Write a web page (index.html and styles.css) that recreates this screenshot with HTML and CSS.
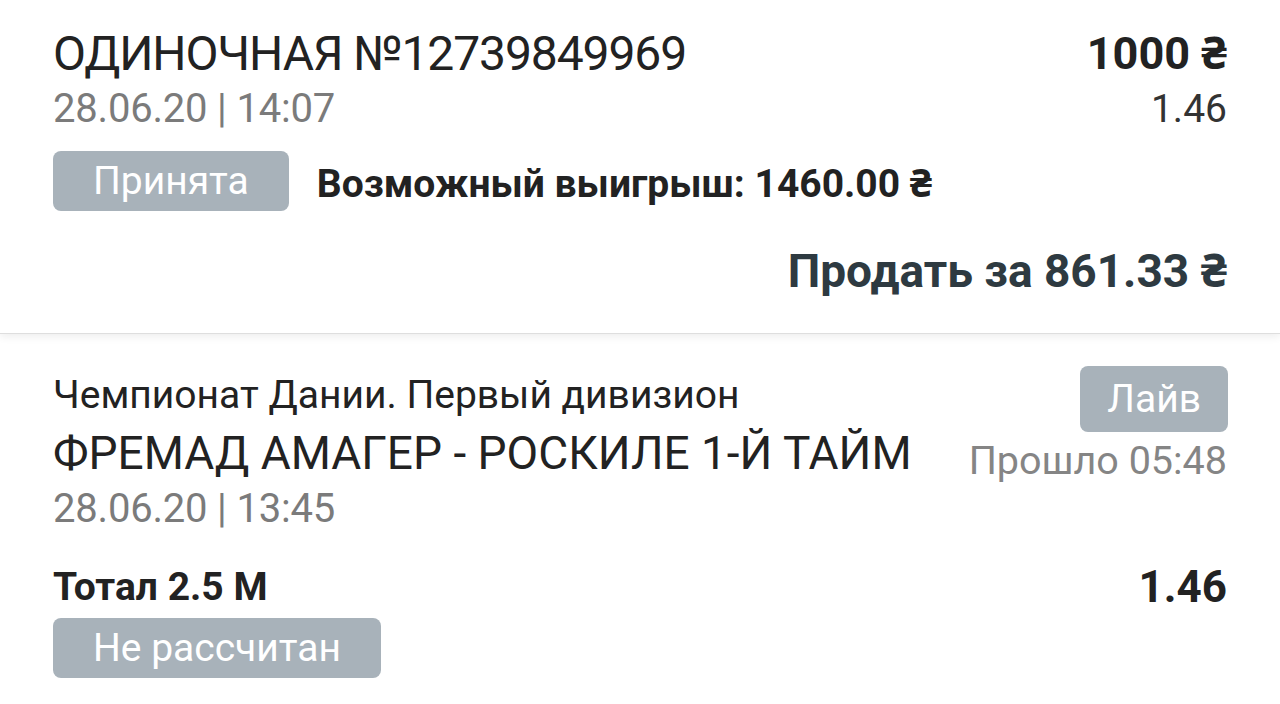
FILE: index.html
```html
<!DOCTYPE html>
<html lang="ru">
  <head>
    <meta charset="UTF-8" />
    <meta name="viewport" content="width=device-width, initial-scale=1.0" />
    <title>Ставка</title>
    <link rel="stylesheet" href="styles.css">
  </head>
  <body>
    <div class="bet-card">
      <div class="bet-summary">
        <div class="row">
          <span class="bet-title">ОДИНОЧНАЯ №12739849969</span>
          <span class="bet-amount">1000 ₴</span>
        </div>
        <div class="row">
          <span class="bet-date">28.06.20 | 14:07</span>
          <span class="bet-coef">1.46</span>
        </div>
        <div class="status-row">
          <span class="badge">Принята</span>
          <span class="possible-win">Возможный выигрыш: 1460.00 ₴</span>
        </div>
        <div class="sell-row">
          <span class="sell-text">Продать за 861.33 ₴</span>
        </div>
      </div>

      <div class="event">
        <div class="event-head">
          <div class="event-info">
            <div class="league">Чемпионат Дании. Первый дивизион</div>
            <div class="match">ФРЕМАД АМАГЕР - РОСКИЛЕ 1-Й ТАЙМ</div>
            <div class="event-date">28.06.20 | 13:45</div>
          </div>
          <div class="event-live">
            <span class="badge badge-live">Лайв</span>
            <span class="elapsed">Прошло 05:48</span>
          </div>
        </div>
        <div class="row outcome-row">
          <span class="outcome">Тотал 2.5 М</span>
          <span class="outcome-coef">1.46</span>
        </div>
        <div class="outcome-status">
          <span class="badge">Не рассчитан</span>
        </div>
      </div>
    </div>
  </body>
</html>
```

FILE: styles.css
```css
body {
  margin: 0;
  background: #fff;
  font-family: Roboto, "Noto Sans", sans-serif;
  color: #222;
}

.bet-card {
  width: 1280px;
}

.bet-summary {
  padding: 27px 53px 34px;
  border-bottom: 1px solid #dedede;
  box-shadow: 0 3px 8px rgba(0, 0, 0, 0.07);
}

.row {
  display: flex;
  justify-content: space-between;
  align-items: center;
}

.bet-title {
  font-size: 48px;
  line-height: 54px;
  letter-spacing: -1.1px;
  color: #222;
}
.bet-amount {
  font-size: 45px;
  line-height: 54px;
  font-weight: 700;
  color: #222;
}

.bet-date {
  font-size: 40px;
  line-height: 56px;
  letter-spacing: -0.2px;
  color: #7b7b7b;
}
.bet-coef {
  font-size: 39px;
  line-height: 56px;
  color: #333;
}

.status-row {
  display: flex;
  align-items: center;
  margin-top: 14px;
}

.badge {
  display: inline-block;
  height: 60px;
  line-height: 60px;
  padding: 0 40px;
  border-radius: 8px;
  background: #a8b2ba;
  color: #fff;
  font-size: 39px;
}

.possible-win {
  margin-left: 28px;
  font-size: 39px;
  font-weight: 700;
  color: #222;
}

.sell-row {
  display: flex;
  justify-content: flex-end;
  margin-top: 32px;
}
.sell-text {
  font-size: 46px;
  line-height: 56px;
  font-weight: 700;
  color: #2e3a41;
}

.event {
  padding: 37px 53px 0;
}

.event-head {
  display: flex;
  justify-content: space-between;
}

.league {
  font-size: 39px;
  line-height: 48px;
  color: #222;
}
.match {
  margin-top: 5px;
  font-size: 46px;
  line-height: 58px;
  color: #222;
}
.event-date {
  font-size: 40px;
  line-height: 54px;
  letter-spacing: -0.2px;
  color: #7b7b7b;
}

.event-live {
  display: flex;
  flex-direction: column;
  align-items: flex-end;
}
.badge-live {
  margin-top: -5px;
  margin-right: -1px;
  height: 66px;
  line-height: 66px;
  padding: 0 27px;
}
.elapsed {
  margin-top: 4px;
  font-size: 39.5px;
  line-height: 50px;
  color: #858585;
}

.outcome-row {
  margin-top: 26px;
}
.outcome {
  font-size: 39px;
  line-height: 50px;
  font-weight: 700;
  color: #222;
}
.outcome-coef {
  font-size: 44px;
  line-height: 50px;
  font-weight: 700;
  color: #222;
}

.outcome-status {
  margin-top: 6px;
}
```
